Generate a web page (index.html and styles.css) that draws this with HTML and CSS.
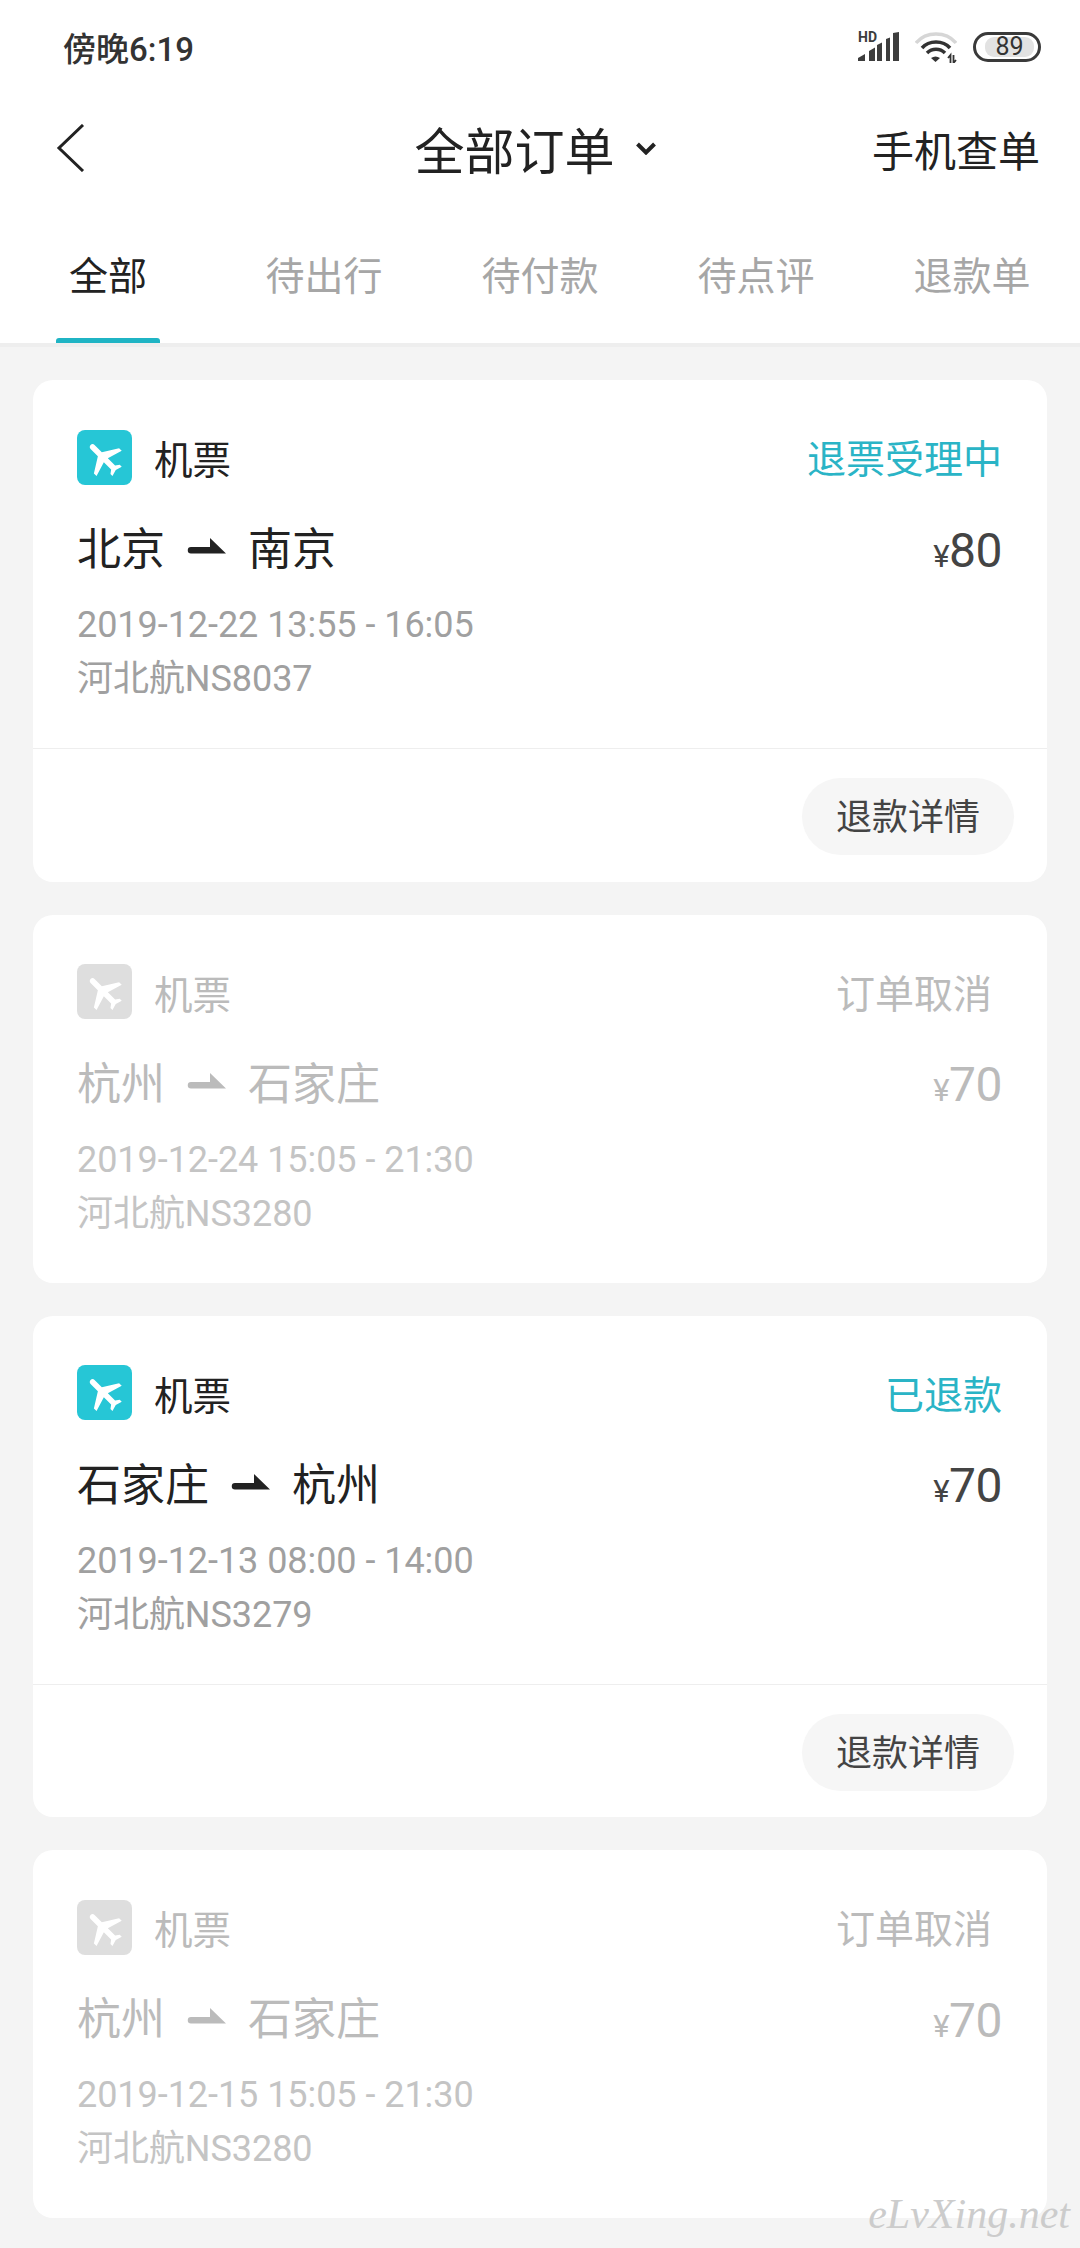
FILE: index.html
```html
<!DOCTYPE html>
<html lang="zh-CN">
<head>
  <meta charset="UTF-8">
  <meta name="viewport" content="width=device-width, initial-scale=1.0">
  <title>全部订单</title>
  <link rel="stylesheet" href="styles.css">
</head>
<body>
<svg class="defs" width="0" height="0">
  <symbol id="plane" viewBox="0 0 24 24">
    <path transform="rotate(-45 12 12)" d="M21 16v-2l-8-5V3.500c0-.83-.67-1.500-1.500-1.500S10 2.670 10 3.500V9l-8 5v2l8-2.500V19l-2 1.500V22l3.500-1 3.500 1v-1.500L13 19v-5.500l8 2.500z"/>
  </symbol>
  <symbol id="route-arrow" viewBox="0 0 39 16">
    <path d="M4 9H23V0L39 15.500H4a3.200 3.200 0 0 1 0-6.500z"/>
  </symbol>
</svg>

<div class="phone">
  <header class="top">
    <div class="status-bar">
      <span class="clock">傍晚6:19</span>
      <div class="status-icons">
        <div class="signal">
          <span class="hd">HD</span>
          <svg width="41" height="30" viewBox="0 0 41 30">
            <path d="M0 29v-3l7-4v7zM11 29V19l6-3.500V29zM19 29V13l5-2.500V29zM28 29V7l4-1.500V29zM35 29V1l6-1v29z" fill="#3d3d3d"/>
          </svg>
        </div>
        <svg class="ico-wifi" width="42" height="31" viewBox="0 0 42 31">
          <path d="M1 11C11-1 31-1 41 11" fill="none" stroke="#d6d6d6" stroke-width="3.500"/>
          <path d="M7 16C14 8 28 8 35 16M12 21C17 16 25 16 30 21" fill="none" stroke="#333" stroke-width="3.500"/>
          <path d="M16 26c3-2 6-2 9 0l-4.500 4z" fill="#333"/>
          <path d="M35.500 31V23l-2.500 3M38.500 23v8l2.500-3" fill="none" stroke="#333" stroke-width="1.800"/>
        </svg>
        <div class="battery"><span class="battery-num">89</span></div>
      </div>
    </div>
    <nav class="nav">
      <svg class="back" width="30" height="48" viewBox="0 0 30 48"><path d="M28 1 4 24l24 23" fill="none" stroke="#222" stroke-width="3"/></svg>
      <div class="nav-title">全部订单
        <svg width="20" height="13" viewBox="0 0 20 13"><path d="M1.500 2 10 10.500 18.500 2" fill="none" stroke="#222" stroke-width="4"/></svg>
      </div>
      <div class="nav-action">手机查单</div>
    </nav>
    <div class="tabs">
      <div class="tab active">全部</div>
      <div class="tab">待出行</div>
      <div class="tab">待付款</div>
      <div class="tab">待点评</div>
      <div class="tab">退款单</div>
    </div>
  </header>

  <main class="orders">
    <section class="card">
      <div class="card-body">
        <div class="row">
          <div class="type"><svg class="type-icon"><use href="#plane"/></svg>机票</div>
          <div class="state">退票受理中</div>
        </div>
        <div class="row route-row">
          <div class="route">北京<svg class="arrow"><use href="#route-arrow"/></svg>南京</div>
          <div class="price"><span class="yen">¥</span>80</div>
        </div>
        <div class="meta first">2019-12-22 13:55 - 16:05</div>
        <div class="meta">河北航NS8037</div>
      </div>
      <div class="card-foot"><div class="btn">退款详情</div></div>
    </section>

    <section class="card muted">
      <div class="card-body">
        <div class="row">
          <div class="type"><svg class="type-icon"><use href="#plane"/></svg>机票</div>
          <div class="state">订单取消</div>
        </div>
        <div class="row route-row">
          <div class="route">杭州<svg class="arrow"><use href="#route-arrow"/></svg>石家庄</div>
          <div class="price"><span class="yen">¥</span>70</div>
        </div>
        <div class="meta first">2019-12-24 15:05 - 21:30</div>
        <div class="meta">河北航NS3280</div>
      </div>
    </section>

    <section class="card">
      <div class="card-body">
        <div class="row">
          <div class="type"><svg class="type-icon"><use href="#plane"/></svg>机票</div>
          <div class="state">已退款</div>
        </div>
        <div class="row route-row">
          <div class="route">石家庄<svg class="arrow"><use href="#route-arrow"/></svg>杭州</div>
          <div class="price"><span class="yen">¥</span>70</div>
        </div>
        <div class="meta first">2019-12-13 08:00 - 14:00</div>
        <div class="meta">河北航NS3279</div>
      </div>
      <div class="card-foot"><div class="btn">退款详情</div></div>
    </section>

    <section class="card muted">
      <div class="card-body">
        <div class="row">
          <div class="type"><svg class="type-icon"><use href="#plane"/></svg>机票</div>
          <div class="state">订单取消</div>
        </div>
        <div class="row route-row">
          <div class="route">杭州<svg class="arrow"><use href="#route-arrow"/></svg>石家庄</div>
          <div class="price"><span class="yen">¥</span>70</div>
        </div>
        <div class="meta first">2019-12-15 15:05 - 21:30</div>
        <div class="meta">河北航NS3280</div>
      </div>
    </section>
  </main>

  <div class="watermark">eLvXing.net</div>
</div>
</body>
</html>
```

FILE: styles.css
```css
*, *::before, *::after { box-sizing: border-box; }
html, body { margin: 0; height: 100%; }
body { background: #f4f4f4; font-family: Roboto, "Noto Sans CJK SC", sans-serif; color: #222; }
.defs { position: absolute; }
.phone { position: relative; height: 2248px; overflow: hidden; }

/* header */
.top { background: #fff; height: 347px; border-bottom: 4px solid #eee; }
.status-bar { height: 94px; padding: 0 39px 0 63px; display: flex; align-items: center; justify-content: space-between; }
.clock { font-size: 33px; font-weight: 500; color: #333; }
.status-icons { display: flex; align-items: center; gap: 16px; }
.signal { position: relative; height: 30px; }
.signal svg { display: block; }
.hd { position: absolute; left: 0; top: -2px; font-size: 14px; line-height: 14px; font-weight: 700; color: #3d3d3d; }
.battery { width: 68px; height: 30px; border: 3px solid #3a3a3a; border-radius: 15px; padding: 2px 4px 2px 9px; display: flex; }
.battery-num { flex: 1; background: #e2e2e2; border-radius: 9px; font-size: 25px; line-height: 20px; text-align: center; color: #333; }

.nav { height: 112px; padding: 0 40px 4px 55px; display: flex; align-items: center; justify-content: space-between; }
.nav-title { font-size: 50px; display: flex; align-items: center; gap: 22px; margin-left: 114px; }
.nav-action { font-size: 42px; }

.tabs { display: flex; height: 137px; }
.tab { flex: 1; text-align: center; font-size: 39px; line-height: 142px; color: #a6a6a6; position: relative; }
.tab.active { color: #222; }
.tab.active::after { content: ""; position: absolute; left: 56px; bottom: 0; width: 104px; height: 5px; background: #1fb4c4; border-radius: 3px 3px 0 0; }

/* orders */
.orders { padding: 33px 33px 0; display: flex; flex-direction: column; gap: 33px; }
.card { background: #fff; border-radius: 20px; }
.card-body { padding: 50px 45px 42px 44px; }
.row { display: flex; align-items: center; justify-content: space-between; }
.type { display: flex; align-items: center; gap: 22px; font-size: 38.500px; height: 55px; padding-bottom: 1px; }
.type-icon { width: 55px; height: 55px; padding: 5px; background: #26c6d6; border-radius: 8px; fill: #fff; flex: none; }
.state { font-size: 39px; color: #2ab4c6; margin-top: -3px; }
.route-row { margin-top: 32px; height: 60px; }
.route { font-size: 44px; display: flex; align-items: center; gap: 22px; padding-bottom: 2px; }
.arrow { width: 39px; height: 16px; fill: #222; }
.price { font-size: 48px; color: #444; padding-top: 6px; letter-spacing: -0.5px; }
.yen { font-size: 31px; }
.meta { font-size: 36px; line-height: 54px; color: #a0a0a0; letter-spacing: -0.05px; }
.meta.first { margin-top: 21px; }
.card-foot { border-top: 1px solid #eee; padding: 29px 33px 26.500px; display: flex; justify-content: flex-end; }
.btn { width: 212px; height: 77px; border-radius: 39px; background: #f6f6f6; font-size: 36px; line-height: 80px; text-align: center; color: #444; }

.muted .type, .muted .route, .muted .state, .muted .price { color: #bbb; }
.muted .meta { color: #c4c4c4; }
.muted .type-icon { background: #dedede; }
.muted .arrow { fill: #bbb; }
.muted .state { margin-right: 10px; }

.watermark { position: absolute; right: 10px; top: 2190px; font: italic 42px "Liberation Serif", serif; color: #ccc; }
```
